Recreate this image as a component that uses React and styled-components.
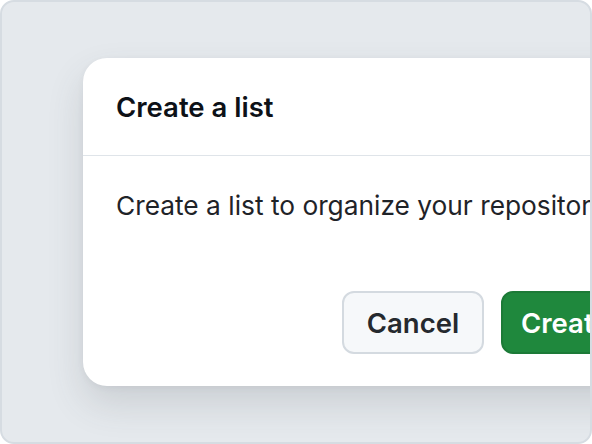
import React from "react"
import styled, { createGlobalStyle } from "styled-components"

const Global = createGlobalStyle`
  html, body {
    margin: 0;
    padding: 0;
    background: #ffffff;
  }
  body {
    font-family: Inter, "Noto Sans", "Liberation Sans", sans-serif;
    -webkit-font-smoothing: antialiased;
  }
`

const Frame = styled.div`
  box-sizing: border-box;
  width: 592px;
  height: 444px;
  background: #e5e9ed;
  border: 2px solid #d6dce2;
  border-radius: 14px;
  overflow: hidden;
  display: flex;
  align-items: flex-start;
  padding: 56px 0 0 81px;
`

const Dialog = styled.div`
  flex-shrink: 0;
  width: 680px;
  background: #ffffff;
  border-radius: 24px;
  box-shadow: 0 18px 36px rgba(66, 74, 83, 0.16), 0 2px 6px rgba(66, 74, 83, 0.06);
  display: flex;
  flex-direction: column;
`

const Header = styled.div`
  height: 97px;
  display: flex;
  align-items: center;
  padding: 0 33px;
  border-bottom: 1.5px solid #dfe4e9;
`

const Title = styled.h2`
  margin: 0;
  font-size: 27.5px;
  font-weight: 600;
  color: #0d1117;
`

const Body = styled.div`
  display: flex;
  flex-direction: column;
  padding: 32px 33px 32px;
`

const Text = styled.p`
  margin: 0;
  font-size: 26.3px;
  line-height: 36px;
  color: #1f2328;
  white-space: nowrap;
`

const Footer = styled.div`
  display: flex;
  gap: 17px;
  margin-top: 67px;
  padding-left: 226px;
`

const Button = styled.button`
  box-sizing: border-box;
  height: 63px;
  padding: 0 ${(p) => (p.primary ? "18px" : "22px")};
  border-radius: 12px;
  font-family: inherit;
  font-size: 27.5px;
  font-weight: 600;
  border: 2px solid ${(p) => (p.primary ? "#1c7a37" : "#d4dae0")};
  background: ${(p) => (p.primary ? "#1f883d" : "#f6f8fa")};
  color: ${(p) => (p.primary ? "#ffffff" : "#25292e")};
  min-width: ${(p) => (p.primary ? "0" : "142px")};
`

export default function App() {
  return (
    <>
      <Global />
      <Frame>
        <Dialog>
          <Header>
            <Title>Create a list</Title>
          </Header>
          <Body>
            <Text>Create a list to organize your repositories.</Text>
            <Footer>
              <Button>Cancel</Button>
              <Button primary>Create</Button>
            </Footer>
          </Body>
        </Dialog>
      </Frame>
    </>
  )
}
